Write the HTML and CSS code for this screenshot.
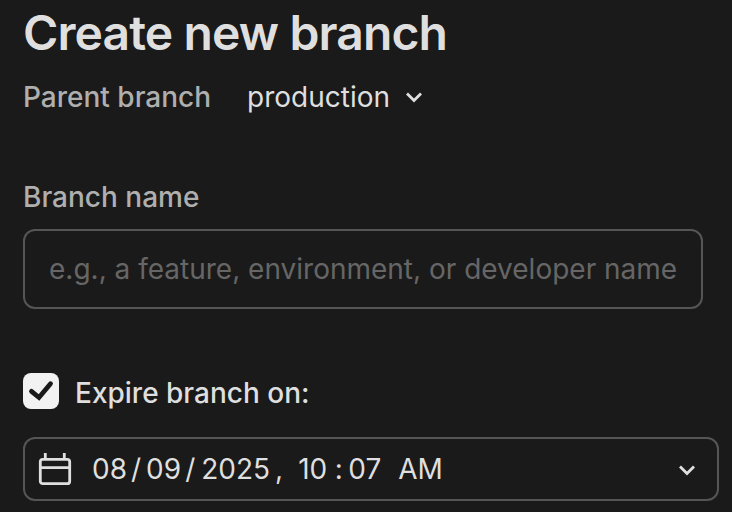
FILE: index.html
```
<!DOCTYPE html>
<html lang="en">
<head>
<meta charset="utf-8">
<title>Create new branch</title>
<link rel="stylesheet" href="styles.css">
</head>
<body>
<main class="dialog">
  <h1 class="title">Create new branch</h1>
  <div class="parent">
    <span class="label">Parent branch</span>
    <span class="parent-value">production</span>
    <svg class="chevron" viewBox="0 0 18 12"><path d="M2 2.500l7 7 7-7"/></svg>
  </div>
  <label class="label name-label" for="name">Branch name</label>
  <input class="name-input" id="name" placeholder="e.g., a feature, environment, or developer name">
  <div class="expire">
    <span class="checkbox"><svg viewBox="0 0 36 36"><path d="M8.500 18.300l7.500 6.200L27.500 10.700"/></svg></span>
    <span class="expire-label">Expire branch on:</span>
  </div>
  <div class="date">
    <svg class="calendar" viewBox="0 0 34 34"><rect x="2.300" y="7.300" width="29.400" height="24.400" rx="2.500"/><path d="M2 15.700h30M7.300 1v6M26.300 1v6"/></svg>
    <span class="month">08</span><span class="slash">/</span><span class="day">09</span><span class="slash">/</span><span class="year">2025</span><span class="comma">,</span><span class="hour">10</span><span class="colon">:</span><span class="minute">07</span><span class="period">AM</span>
    <svg class="chevron date-chevron" viewBox="0 0 18 12"><path d="M2 2.500l7 7 7-7"/></svg>
  </div>
</main>
</body>
</html>
```
FILE: styles.css
```
* { box-sizing: border-box; }
body { margin: 0; height: 512px; overflow: hidden; background: #1a1a1a; color: #dfdfdf; font: 28px/34px Inter, sans-serif; }
.dialog { padding: 4px 13px 0 23px; }
.title { margin: 0; font-size: 48px; line-height: 58px; font-weight: 600; letter-spacing: -0.88px; }
.parent { display: flex; align-items: center; height: 34px; margin-top: 18px; }
.label { color: #afafaf; font-weight: 500; }
.parent-value { margin-left: 36px; }
.chevron { width: 18px; height: 12px; margin-left: 15px; fill: none; stroke: #dfdfdf; stroke-width: 2.8; }
.name-label { display: block; margin-top: 66px; }
.name-input { display: block; width: 680px; height: 80px; margin-top: 15px; padding: 0 24px; border: 2px solid #555; border-radius: 12px; background: transparent; color: inherit; font: inherit; outline: 0; }
.name-input::placeholder { color: #666; opacity: 1; }
.expire { display: flex; align-items: center; height: 36px; margin-top: 64px; gap: 16px; }
.expire-label { padding-top: 4px; font-weight: 500; }
.checkbox { width: 36px; height: 36px; border-radius: 8px; background: #f2f2f2; }
.checkbox svg { display: block; fill: none; stroke: #1a1a1a; stroke-width: 4.8; stroke-linecap: round; }
.date { display: flex; align-items: center; width: 696px; height: 64px; margin-top: 28px; padding: 0 21px 0 13px; border: 2px solid #555; border-radius: 12px; }
.calendar { width: 34px; height: 34px; fill: none; stroke: #dfdfdf; stroke-width: 2.8; }
.month { margin-left: 20px; }
.slash { margin-left: 4px; }
.day { margin-left: 5px; }
.year { margin-left: 6px; }
.comma { margin-left: 5px; }
.hour { margin-left: 15px; }
.colon { margin-left: 7.5px; }
.minute { margin-left: 5.5px; }
.period { margin-left: 17px; }
.date-chevron { margin: 2px 0 0 auto; }
```
